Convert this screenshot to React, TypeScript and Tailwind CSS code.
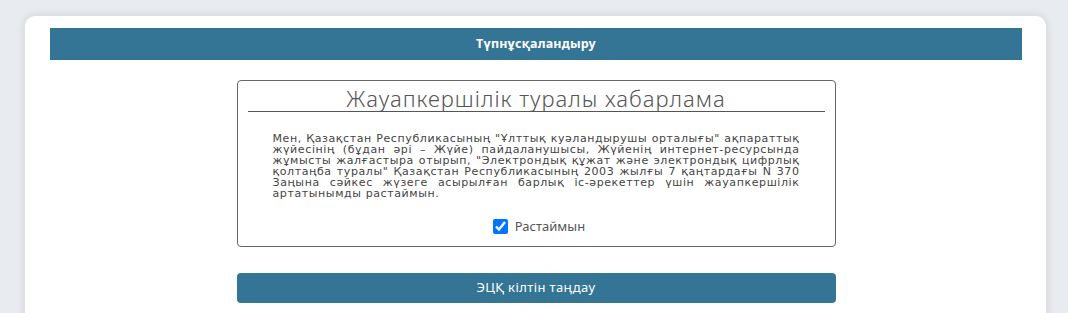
const LINES = [
  'Мен, Қазақстан Республикасының "Ұлттық куәландырушы орталығы" ақпараттық',
  "жүйесінің (бұдан әрі – Жүйе) пайдаланушысы, Жүйенің интернет-ресурсында",
  'жұмысты жалғастыра отырып, "Электрондық құжат және электрондық цифрлық',
  'қолтаңба туралы" Қазақстан Республикасының 2003 жылғы 7 қаңтардағы N 370',
  "Заңына сәйкес жүзеге асырылған барлық іс-әрекеттер үшін жауапкершілік",
];

export default function App() {
  return (
    <div className="min-h-[313px] overflow-hidden bg-[#e8ecf0] pl-[25px] pr-[22px] pt-4 font-['Noto_Sans',sans-serif] text-[#555]">
      <div className="rounded-t-[10px] bg-white pb-10 pl-[25px] pr-[24px] pt-3 shadow-[0_0_10px_rgba(0,0,0,0.12)]">
        <div className="flex h-8 items-center justify-center bg-[#347596] text-[12.5px] font-bold tracking-[0.2px] text-white">
          Түпнұсқаландыру
        </div>

        <div className="mx-auto mt-5 w-[599px] rounded border border-[#666] pb-3">
          <h2 className="mx-[10px] border-b border-[#555] pt-1 text-center text-[22px] font-light leading-[26px] tracking-[1px] text-[#555]">
            Жауапкершілік туралы хабарлама
          </h2>

          <div className="mt-[21px] px-[35px] font-['DejaVu_Sans',sans-serif] text-[11px] leading-[11px] tracking-[0.6px] text-[#444]">
            {LINES.map((l) => (
              <div key={l} className="whitespace-nowrap text-justify [text-align-last:justify]">
                {l}
              </div>
            ))}
            <div>артатынымды растаймын.</div>
          </div>

          <label className="ml-[6px] mt-[19px] flex items-center justify-center gap-[7px] text-[13px] leading-4 text-[#555]">
            <input
              type="checkbox"
              defaultChecked
              className="h-[15px] w-[15px] accent-[#0075ff]"
            />
            Растаймын
          </label>
        </div>

        <button className="mx-auto mt-[26px] flex h-[30px] w-[599px] items-center justify-center rounded bg-[#347596] text-[13px] tracking-[0.4px] text-white">
          ЭЦҚ кілтін таңдау
        </button>
      </div>
    </div>
  );
}
